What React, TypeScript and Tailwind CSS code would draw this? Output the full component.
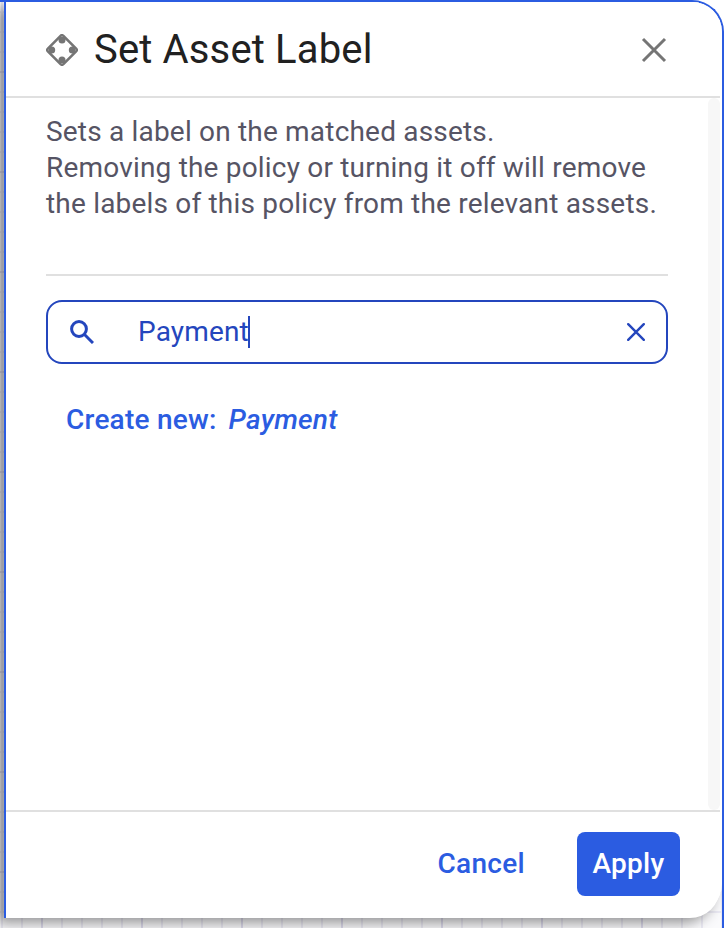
import React from "react";

const gridStyle =
  "bg-[linear-gradient(to_right,#dddbed_2px,transparent_2px),linear-gradient(to_bottom,#dddbed_2px,transparent_2px),linear-gradient(to_right,#ebeaf4_2px,transparent_2px),linear-gradient(to_bottom,#ebeaf4_2px,transparent_2px)] bg-[size:100px_100px,100px_100px,20px_20px,20px_20px] bg-[position:41px_0,0_69px,1px_0,0_9px]";

function AssetIcon() {
  return (
    <svg className="size-8 shrink-0" viewBox="0 0 32 32" fill="none">
      <path d="M14.6 1.9 1.9 14.6a2 2 0 0 0 0 2.8l12.7 12.7a2 2 0 0 0 2.8 0l12.7-12.7a2 2 0 0 0 0-2.8L17.4 1.9a2 2 0 0 0-2.8 0Z" stroke="#757575" strokeWidth="2.6" />
      <g fill="#757575">
        <path d="M12.5 3h7v3a3.5 3.5 0 0 1-7 0Z" />
        <path d="M12.5 29h7v-3a3.5 3.5 0 0 0-7 0Z" />
        <path d="M3 12.5v7h2.7a3.5 3.5 0 0 0 0-7Z" />
        <path d="M29 12.5v7h-2.7a3.5 3.5 0 0 1 0-7Z" />
      </g>
    </svg>
  );
}

export default function App() {
  return (
    <div className="h-[928px] w-[728px] overflow-hidden bg-white font-['Roboto','Liberation_Sans',sans-serif]">
      <div className={`h-[928px] w-[724px] overflow-hidden rounded-tr-[32px] border-t-2 border-r-2 border-[#2b5ce1] bg-[#fafafc] pl-1 ${gridStyle}`}>
        <div className="flex h-[916px] w-[716px] flex-col rounded-br-[30px] border-l-2 border-[#2b5ce1] bg-white shadow-[2px_-4px_0_0_#fff,-7px_5px_14px_0_rgba(0,0,0,0.42)]">
          <header className="flex h-24 shrink-0 items-center border-b-2 border-[#e0e0e0] pt-0.5 pl-10 pr-[52px]">
            <AssetIcon />
            <h1 className="ml-4 grow whitespace-nowrap text-[40px] leading-[48px] tracking-[0.15px] text-[#212121]">Set Asset Label</h1>
            <button aria-label="Close">
              <svg className="size-7" viewBox="0 0 28 28" fill="none" stroke="#757575" strokeWidth="3">
                <path d="m3 3 22 22M25 3 3 25" />
              </svg>
            </button>
          </header>
          <main className="flex grow">
            <div className="ml-10 w-[622px]">
              <p className="whitespace-nowrap pt-4 text-[28px] leading-9 tracking-[0.19px] text-[#565464]">
                Sets a label on the matched assets.
                <br />
                Removing the policy or turning it off will remove
                <br />
                the labels of this policy from the relevant assets.
              </p>
              <hr className="mt-[52px] border-t-2 border-[#e0e0e0]" />
              <div className="mt-6 flex h-16 items-center rounded-2xl border-2 border-[#2446bd] px-[21px] text-[#2446bd]">
                <svg className="ml-px size-6" viewBox="0 0 24 24" fill="none" stroke="currentColor" strokeWidth="3">
                  <circle cx="9" cy="9" r="7.4" />
                  <path d="m14 14 9 9" />
                </svg>
                <span className="ml-11 text-[28px] leading-8 tracking-[0.15px]">Payment</span>
                <span className="-ml-px h-8 w-0.5 bg-[#2446bd]" />
                <svg className="ml-auto size-[18px]" viewBox="0 0 18 18" fill="none" stroke="currentColor" strokeWidth="2.4" strokeLinecap="round">
                  <path d="m1.2 1.2 15.6 15.6M16.8 1.2 1.2 16.8" />
                </svg>
              </div>
              <button className="ml-5 mt-[38px] flex whitespace-nowrap text-[28px] leading-9 font-medium tracking-[0.23px] text-[#2b5ce1]">
                Create new:<em className="ml-3">Payment</em>
              </button>
            </div>
            <div className="ml-auto w-3 rounded-[6px] bg-[#f7f7f7]" />
          </main>
          <footer className="flex h-[108px] shrink-0 items-center justify-end border-t-2 border-[#e0e0e0] pr-10 pb-0.5">
            <button className="mr-[52px] text-[28px] font-medium tracking-[0.3px] text-[#2b5ce1]">Cancel</button>
            <button className="h-16 w-[103px] rounded-lg bg-[#2b5ce1] text-[28px] font-medium tracking-[0.3px] text-white">Apply</button>
          </footer>
        </div>
      </div>
    </div>
  );
}
